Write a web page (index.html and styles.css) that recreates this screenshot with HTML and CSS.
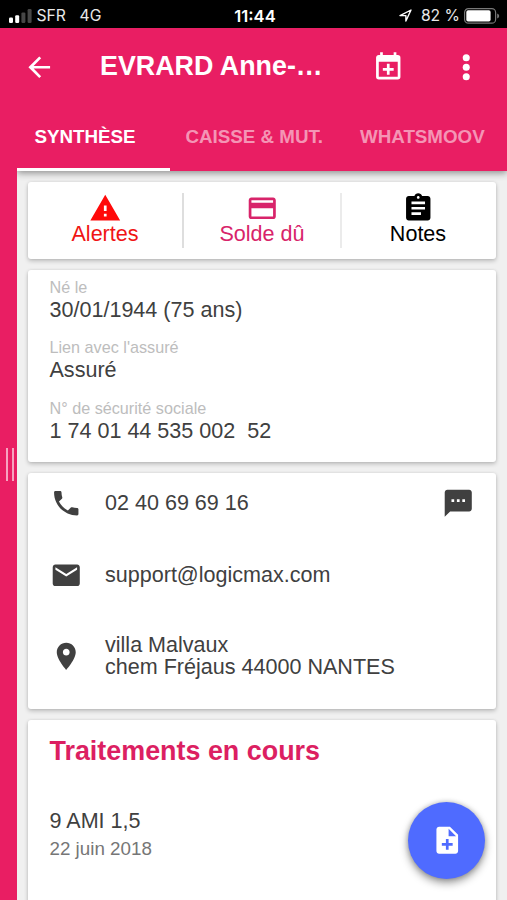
FILE: index.html
```html
<!DOCTYPE html>
<html lang="fr">
<head>
<meta charset="utf-8">
<title>Dossier patient</title>
<link rel="stylesheet" href="styles.css">
</head>
<body>
<div class="statusbar">
  <div class="network">
    <svg class="signal" viewBox="0 0 23 14"><rect x="0" y="8.5" width="4" height="5.5" rx="1.2" fill="#fff"/><rect x="6.2" y="6.2" width="4" height="7.8" rx="1.2" fill="#fff"/><rect x="12.4" y="3.4" width="4" height="10.6" rx="1.2" fill="#464646"/><rect x="18.6" y="0" width="4" height="14" rx="1.2" fill="#464646"/></svg>
    <span class="carrier">SFR</span><span class="tech">4G</span>
  </div>
  <div class="clock">11:44</div>
  <div class="power">
    <svg class="location" viewBox="0 0 13 13"><path d="M1 6.6 12 1 6.9 12V6.6Z" fill="none" stroke="#fff" stroke-width="1.4" stroke-linejoin="round"/></svg>
    <span class="percent">82 %</span>
    <svg class="battery" viewBox="0 0 36 16"><rect x=".6" y=".6" width="31" height="14.6" rx="3.8" fill="none" stroke="#777" stroke-width="1.2"/><rect x="2.3" y="2.3" width="24.3" height="11.2" rx="1.8" fill="#fff"/><path d="M33.2 5.4q2 .6 2 2.5t-2 2.5z" fill="#777"/></svg>
  </div>
</div>
<div class="screen">
  <div class="drawer-edge"><span class="grip"></span></div>
  <div class="page">
    <header class="header">
      <div class="toolbar">
        <svg class="icon back" viewBox="0 0 24 24"><path d="M20 11H7.83l5.59-5.59L12 4l-8 8 8 8 1.41-1.41L7.83 13H20v-2z"/></svg>
        <h1 class="title">EVRARD Anne-…</h1>
        <svg class="icon" viewBox="0 0 24 24"><path d="M19 19H5V8h14m-3-7v2H8V1H6v2H5c-1.11 0-2 .9-2 2v14a2 2 0 0 0 2 2h14a2 2 0 0 0 2-2V5a2 2 0 0 0-2-2h-1V1M11 9.5v3H8v2h3v3h2v-3h3v-2h-3v-3z"/></svg>
        <svg class="icon more" viewBox="0 0 24 24"><circle cx="12" cy="5" r="2.6"/><circle cx="12" cy="12" r="2.6"/><circle cx="12" cy="19" r="2.6"/></svg>
      </div>
      <nav class="tabs">
        <a class="tab active">SYNTHÈSE</a>
        <a class="tab caisse">CAISSE &amp; MUT.</a>
        <a class="tab moov">WHATSMOOV</a>
      </nav>
    </header>
    <main class="cards">
      <section class="card actions">
        <div class="action alert"><svg class="icon" viewBox="0 0 24 24"><path d="M1 21h22L12 2 1 21zm12-3h-2v-2h2v2zm0-4h-2v-4h2v4z"/></svg><span>Alertes</span></div>
        <div class="action balance"><svg class="icon" viewBox="0 0 24 24"><path d="M20 4H4c-1.11 0-1.99.89-1.99 2L2 18c0 1.11.89 2 2 2h16c1.11 0 2-.89 2-2V6c0-1.11-.89-2-2-2zm0 14H4v-6h16v6zm0-10H4V6h16v2z"/></svg><span>Solde dû</span></div>
        <div class="action notes"><svg class="icon" viewBox="0 0 24 24"><path d="M19 3h-4.18C14.4 1.84 13.3 1 12 1c-1.3 0-2.4.84-2.82 2H5c-1.1 0-2 .9-2 2v14c0 1.1.9 2 2 2h14c1.1 0 2-.9 2-2V5c0-1.1-.9-2-2-2zm-7 0c.55 0 1 .45 1 1s-.45 1-1 1-1-.45-1-1 .45-1 1-1zm2 14H7v-2h7v2zm3-4H7v-2h10v2zm0-4H7V7h10v2z"/></svg><span>Notes</span></div>
      </section>
      <section class="card identity">
        <div class="field"><div class="label">Né le</div><div class="value">30/01/1944 (75 ans)</div></div>
        <div class="field"><div class="label">Lien avec l'assuré</div><div class="value">Assuré</div></div>
        <div class="field"><div class="label">N° de sécurité sociale</div><div class="value">1 74 01 44 535 002&nbsp; 52</div></div>
      </section>
      <section class="card contact">
        <div class="row">
          <svg class="icon" viewBox="0 0 24 24"><path d="M6.62 10.79c1.44 2.83 3.76 5.14 6.59 6.59l2.2-2.2c.27-.27.67-.36 1.02-.24 1.12.37 2.33.57 3.57.57.55 0 1 .45 1 1V20c0 .55-.45 1-1 1-9.39 0-17-7.61-17-17 0-.55.45-1 1-1h3.5c.55 0 1 .45 1 1 0 1.25.2 2.45.57 3.57.11.35.03.74-.25 1.02l-2.2 2.2z"/></svg>
          <div class="text">02 40 69 69 16</div>
          <svg class="icon" viewBox="0 0 24 24"><path d="M20 2H4c-1.1 0-1.99.9-1.99 2L2 22l4-4h14c1.1 0 2-.9 2-2V4c0-1.1-.9-2-2-2zM9 11H7V9h2v2zm4 0h-2V9h2v2zm4 0h-2V9h2v2z"/></svg>
        </div>
        <div class="row">
          <svg class="icon" viewBox="0 0 24 24"><path d="M20 4H4c-1.1 0-1.99.9-1.99 2L2 18c0 1.1.9 2 2 2h16c1.1 0 2-.9 2-2V6c0-1.1-.9-2-2-2zm0 4l-8 5-8-5V6l8 5 8-5v2z"/></svg>
          <div class="text">support@logicmax.com</div>
        </div>
        <div class="row address">
          <svg class="icon" viewBox="0 0 24 24"><path d="M12 2C8.13 2 5 5.13 5 9c0 5.25 7 13 7 13s7-7.75 7-13c0-3.87-3.13-7-7-7zm0 9.5c-1.38 0-2.5-1.12-2.5-2.5s1.12-2.5 2.5-2.5 2.5 1.12 2.5 2.5-1.12 2.5-2.5 2.5z"/></svg>
          <div class="text"><div>villa Malvaux</div><div>chem Fréjaus 44000 NANTES</div></div>
        </div>
      </section>
      <section class="card care">
        <h2 class="heading">Traitements en cours</h2>
        <div class="act">9 AMI 1,5</div>
        <div class="date">22 juin 2018</div>
      </section>
    </main>
  </div>
</div>
<div class="fab"><svg class="icon" viewBox="0 0 24 24"><path d="M14 2H6c-1.1 0-1.99.9-1.99 2L4 20c0 1.1.89 2 1.99 2H18c1.1 0 2-.9 2-2V8l-6-6zm2 14h-3v3h-2v-3H8v-2h3v-3h2v3h3v2zm-3-7V3.5L18.5 9H13z"/></svg></div>
</body>
</html>
```

FILE: styles.css
```css
* { box-sizing: border-box; }

body {
  margin: 0;
  height: 900px;
  overflow: hidden;
  display: flex;
  flex-direction: column;
  font-family: "Liberation Sans", Arial, sans-serif;
  font-size: 21.55px;
  color: #404040;
  background: #f0f0f0;
}

.icon {
  width: 32.5px;
  height: 32.5px;
  flex: none;
  display: block;
  fill: currentColor;
}

/* Status bar */
.statusbar {
  height: 28px;
  flex: none;
  display: grid;
  grid-template-columns: 1fr auto 1fr;
  align-items: center;
  padding: 2px 7px 0 9px;
  background: #000;
  color: #e8e8e8;
  font: 15.7px/26px Inter, sans-serif;
}
.network, .power { display: flex; align-items: center; }
.signal { width: 23px; height: 14px; margin-right: 4.5px; }
.carrier { width: 43px; }
.clock { padding-left: 1px; color: #fff; font-weight: 600; font-size: 16.6px; }
.power { justify-content: flex-end; }
.location { width: 13px; height: 13px; margin-right: 9px; }
.percent { margin-right: 4px; white-space: nowrap; }
.carrier, .tech, .percent { padding-top: 1px; }
.battery { width: 36px; height: 16px; }

/* Frame */
.screen { flex: 1; min-height: 0; display: flex; }
.drawer-edge {
  position: relative;
  z-index: 1;
  width: 17px;
  flex: none;
  display: flex;
  align-items: center;
  justify-content: flex-end;
  padding-right: 3px;
  background: #e91e63;
}
.grip {
  width: 8px;
  height: 33px;
  border: solid #f7a3c0;
  border-width: 0 2px;
}
.page { flex: 1; min-width: 0; display: flex; flex-direction: column; }

/* Header */
.header {
  height: 142.5px;
  flex: none;
  display: flex;
  flex-direction: column;
  justify-content: space-between;
  background: #e91e63;
  color: #fff;
  box-shadow: 0 2px 7px rgba(0, 0, 0, .42);
}
.toolbar { height: 78px; display: flex; align-items: center; padding-left: 5.5px; }
.title {
  width: 271.5px;
  margin: 0 0 0 45px;
  padding-bottom: 3px;
  font-size: 26.85px;
  line-height: 30px;
  white-space: nowrap;
}
.more { margin-left: 45.5px; }
.tabs { height: 64px; display: flex; font-size: 18.75px; font-weight: bold; line-height: 60px; white-space: nowrap; }
.tab { color: rgba(255, 255, 255, .54); }
.active { width: 153px; padding-left: 17.5px; color: #fff; border-bottom: 3px solid #fff; }
.caisse { width: 190px; padding-left: 15.5px; }

/* Cards */
.cards { padding: 11px 11px 0; display: flex; flex-direction: column; gap: 11px; }
.card {
  flex: none;
  background: #fff;
  border-radius: 3px;
  box-shadow: 0 2px 4px rgba(0, 0, 0, .22), 0 0 3px rgba(0, 0, 0, .08);
}
.actions { height: 77px; display: flex; align-items: center; }
.action {
  flex: 1;
  height: 55px;
  display: flex;
  flex-direction: column;
  align-items: center;
  line-height: 24px;
}
.action .icon { margin: -.5px 0 -2.5px; }
.action + .action { border-left: 2px solid #dedede; }
.alert { flex: none; width: 154px; color: #f01414; }
.alert .icon { color: #ff0a0a; }
.balance { flex: none; width: 158px; color: #d8246a; }
.action.notes { padding-right: 2px; color: #000; border-color: #ebebeb; }

.identity { height: 192.5px; padding: 7px 21.5px; display: flex; flex-direction: column; gap: 15.7px; }
.label { font-size: 16.2px; line-height: 20px; color: #bdbdbd; }
.value { line-height: 25px; }

.contact { height: 236px; padding: 14px 22px 14px 21.5px; }
.row { display: flex; align-items: center; gap: 23px; height: 32.5px; margin-bottom: 39px; }
.row .text { flex: 1; line-height: 21.6px; white-space: nowrap; }
.address { height: 52px; }

.care { height: 200px; padding: 16px 21.5px; }
.heading { margin: 0 0 41px; font-size: 26.9px; line-height: 30px; color: #dc1f62; }
.act { line-height: 28px; }
.date { font-size: 18.8px; line-height: 28px; color: #767676; }

/* Floating action button */
.fab {
  position: absolute;
  left: 408px;
  top: 802px;
  width: 77px;
  height: 77px;
  display: flex;
  align-items: center;
  justify-content: center;
  padding-left: 2px;
  border-radius: 50%;
  background: #4f6bff;
  color: #fff;
  box-shadow: 0 4px 8px rgba(0, 0, 0, .4), 0 0 5px rgba(0, 0, 0, .2);
}
```
